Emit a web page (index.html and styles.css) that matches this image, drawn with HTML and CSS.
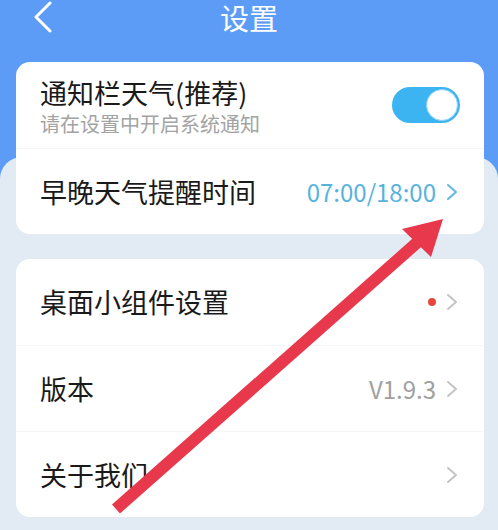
FILE: index.html
```html
<!DOCTYPE html>
<html lang="zh-CN">
  <head>
    <meta charset="UTF-8" />
    <meta name="viewport" content="width=device-width, initial-scale=1.0" />
    <title>设置</title>
    <link rel="stylesheet" href="styles.css">
  </head>
  <body>
    <div class="page">
      <div class="nav">
        <svg class="back" width="20" height="32" viewBox="0 0 20 32">
          <polyline points="17,2 3,16 17,30" />
        </svg>
        <div class="nav-title">设置</div>
      </div>

      <div class="content">
        <div class="card">
          <div class="row row-notify">
            <div class="row-text">
              <div class="row-title">通知栏天气(推荐)</div>
              <div class="row-sub">请在设置中开启系统通知</div>
            </div>
            <div class="switch"><span class="knob"></span></div>
          </div>
          <div class="row">
            <div class="row-title">早晚天气提醒时间</div>
            <div class="row-end">
              <span class="value blue">07:00/18:00</span>
              <svg class="chev blue-chev" width="12" height="18" viewBox="0 0 12 18">
                <polyline points="2,2 10,9 2,16" />
              </svg>
            </div>
          </div>
        </div>

        <div class="card">
          <div class="row">
            <div class="row-title">桌面小组件设置</div>
            <div class="row-end">
              <span class="dot"></span>
              <svg class="chev" width="12" height="18" viewBox="0 0 12 18">
                <polyline points="2,2 10,9 2,16" />
              </svg>
            </div>
          </div>
          <div class="row">
            <div class="row-title">版本</div>
            <div class="row-end">
              <span class="value">V1.9.3</span>
              <svg class="chev" width="12" height="18" viewBox="0 0 12 18">
                <polyline points="2,2 10,9 2,16" />
              </svg>
            </div>
          </div>
          <div class="row">
            <div class="row-title">关于我们</div>
            <div class="row-end">
              <svg class="chev" width="12" height="18" viewBox="0 0 12 18">
                <polyline points="2,2 10,9 2,16" />
              </svg>
            </div>
          </div>
        </div>
      </div>

      <!-- annotation arrow drawn over the screenshot -->
      <svg class="pointer" width="498" height="530" viewBox="0 0 498 530">
        <line x1="116" y1="509" x2="420" y2="240" />
        <polygon points="443,219 402,229 431,257" />
      </svg>
    </div>
  </body>
</html>
```

FILE: styles.css
```css
:root {
  --blue: #5c9cf6;
  --panel: #e2ebf4;
  --toggle: #3cb4f2;
}

* {
  padding: 0;
  margin: 0;
  box-sizing: border-box;
}

body {
  font-family: "Noto Sans CJK SC", "Noto Sans", sans-serif;
  background-color: var(--panel);
}

.page {
  position: relative;
  width: 498px;
  height: 530px;
  overflow: hidden;
  background-color: var(--blue);
}

.nav {
  position: relative;
  height: 36px;
  display: flex;
  justify-content: center;
  align-items: flex-start;
}

.back {
  position: absolute;
  left: 33px;
  top: 1px;
}

.back polyline {
  fill: none;
  stroke: white;
  stroke-width: 3;
  stroke-linecap: round;
  stroke-linejoin: round;
}

.nav-title {
  color: white;
  font-size: 29px;
  line-height: 34px;
}

.content {
  position: relative;
  padding: 26px 14px 0 16px;
  display: flex;
  flex-direction: column;
  gap: 25px;
}

.content::before {
  content: '';
  position: absolute;
  top: 121px;
  left: 0;
  right: 0;
  height: 500px;
  border-radius: 22px 22px 0 0;
  background-color: var(--panel);
}

.card {
  position: relative;
  background-color: white;
  border-radius: 14px;
  overflow: hidden;
}

.row {
  height: 86px;
  padding: 0 26px 0 24px;
  display: flex;
  justify-content: space-between;
  align-items: center;
  border-top: 1px solid #f3f5f8;
}

.row:first-child {
  border-top: none;
}

.row-notify {
  align-items: flex-start;
  padding-top: 16px;
}

.row-title {
  font-size: 27px;
  line-height: 34px;
  color: #1a1a1a;
}

.row-notify .row-title {
  line-height: 30px;
}

.row-sub {
  margin-top: 4px;
  font-size: 20px;
  line-height: 24px;
  color: #a3a3a3;
}

.switch {
  margin-top: 9px;
  margin-right: -2px;
  width: 68px;
  height: 36px;
  border-radius: 18px;
  background-color: var(--toggle);
  display: flex;
  justify-content: flex-end;
  align-items: center;
  padding-right: 2px;
}

.knob {
  width: 32px;
  height: 32px;
  border-radius: 50%;
  background-color: white;
  border: 1px solid #8fd3f7;
}

.row-end {
  display: flex;
  align-items: center;
  gap: 10px;
}

.value {
  font-size: 24px;
  color: #a0a0a0;
}

.value.blue {
  color: #56b3de;
}

.chev polyline {
  fill: none;
  stroke: #c4c4c4;
  stroke-width: 2;
  stroke-linecap: round;
  stroke-linejoin: round;
}

.blue-chev polyline {
  stroke: #62b8e0;
}

.dot {
  width: 8px;
  height: 8px;
  border-radius: 50%;
  background-color: #e8463c;
}

.pointer {
  position: absolute;
  top: 0;
  left: 0;
}

.pointer line {
  stroke: #e7384c;
  stroke-width: 12;
}

.pointer polygon {
  fill: #e7384c;
}
```
